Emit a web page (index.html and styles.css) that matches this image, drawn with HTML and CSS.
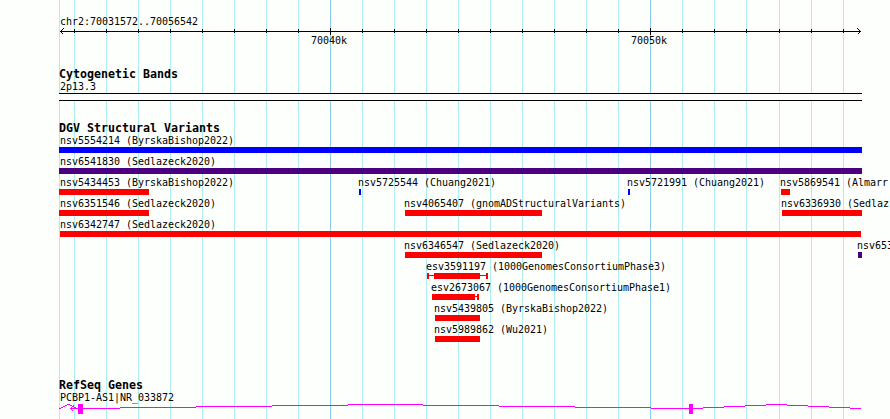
FILE: index.html
```
<!DOCTYPE html>
<html lang="en">
<head>
<meta charset="utf-8">
<title>Genome browser</title>
<link rel="stylesheet" href="styles.css">
</head>
<body>
<main class="browser">
  <svg class="grid" width="890" height="419" aria-hidden="true">
    <path class="minor" d="M59.5 0V419M74.5 0V419M106.5 0V419M138.5 0V419M170.5 0V419M202.5 0V419M234.5 0V419M266.5 0V419M298.5 0V419M362.5 0V419M394.5 0V419M426.5 0V419M458.5 0V419M490.5 0V419M522.5 0V419M554.5 0V419M586.5 0V419M618.5 0V419M682.5 0V419M714.5 0V419M746.5 0V419M779.5 0V419M811.5 0V419M843.5 0V419"/>
    <path class="major" d="M330.5 0V419M650.5 0V419"/>
  </svg>

  <svg class="ruler" width="890" height="66">
    <text x="60" y="25">chr2:70031572..70056542</text>
    <path class="ink" d="M60 31.5H861M74.5 29V33M106.5 29V33M138.5 29V33M170.5 29V33M202.5 29V33M234.5 29V33M266.5 29V33M298.5 29V33M330.5 28V35M362.5 29V33M394.5 29V33M426.5 29V33M458.5 29V33M490.5 29V33M522.5 29V33M554.5 29V33M586.5 29V33M618.5 29V33M650.5 28V35M682.5 29V33M714.5 29V33M746.5 29V33M779.5 29V33M811.5 29V33M843.5 29V33M63.5 28.5L60.5 31.5L63.5 34.5M857.5 28.5L860.5 31.5L857.5 34.5"/>
    <text x="311" y="44">70040k</text>
    <text x="631" y="44">70050k</text>
  </svg>

  <section class="track cyto">
    <h2>Cytogenetic Bands</h2>
    <svg width="890" height="21">
      <text x="60" y="10">2p13.3</text>
      <rect class="band" x="59" y="14" width="803" height="6"/>
      <path class="ink" d="M59 13.5H862M59 20.5H862"/>
    </svg>
  </section>

  <section class="track variants">
    <h2>DGV Structural Variants</h2>
    <svg width="890" height="21"><text x="60" y="10">nsv5554214 (ByrskaBishop2022)</text><rect class="blue" x="59" y="13" width="803" height="6"/></svg>
    <svg width="890" height="21"><text x="60" y="10">nsv6541830 (Sedlazeck2020)</text><rect class="purple" x="59" y="13" width="803" height="6"/></svg>
    <svg width="890" height="21">
      <text x="60" y="10">nsv5434453 (ByrskaBishop2022)</text><rect class="red" x="59" y="13" width="90" height="6"/>
      <text x="358" y="10">nsv5725544 (Chuang2021)</text><rect class="blue" x="359" y="13" width="2" height="6"/>
      <text x="627" y="10">nsv5721991 (Chuang2021)</text><rect class="blue" x="628" y="13" width="2" height="6"/>
      <text x="780" y="10">nsv5869541 (Almarr</text><rect class="red" x="781" y="13" width="9" height="6"/>
    </svg>
    <svg width="890" height="21">
      <text x="60" y="10">nsv6351546 (Sedlazeck2020)</text><rect class="red" x="59" y="13" width="90" height="6"/>
      <text x="404" y="10">nsv4065407 (gnomADStructuralVariants)</text><rect class="red" x="405" y="13" width="137" height="6"/>
      <text x="781" y="10">nsv6336930 (Sedlaz</text><rect class="red" x="782" y="13" width="80" height="6"/>
    </svg>
    <svg width="890" height="21"><text x="60" y="10">nsv6342747 (Sedlazeck2020)</text><rect class="red" x="60" y="13" width="801" height="6"/></svg>
    <svg width="890" height="21">
      <text x="404" y="10">nsv6346547 (Sedlazeck2020)</text><rect class="red" x="405" y="13" width="137" height="6"/>
      <text x="857" y="10">nsv653</text><rect class="purple" x="858" y="13" width="4" height="6"/>
    </svg>
    <svg width="890" height="21"><text x="426" y="10">esv3591197 (1000GenomesConsortiumPhase3)</text><path class="red" d="M427 13h2v2h5v-2h46v2h6v-2h2v6h-2v-3h-6v3h-46v-3h-5v3h-2z"/></svg>
    <svg width="890" height="21"><text x="431" y="10">esv2673067 (1000GenomesConsortiumPhase1)</text><path class="red" d="M432 13h43v2h2v-2h2v6h-2v-3h-2v3h-43z"/></svg>
    <svg width="890" height="21"><text x="434" y="10">nsv5439805 (ByrskaBishop2022)</text><rect class="red" x="435" y="13" width="45" height="6"/></svg>
    <svg width="890" height="21"><text x="434" y="10">nsv5989862 (Wu2021)</text><rect class="red" x="435" y="13" width="45" height="6"/></svg>
  </section>

  <section class="track genes">
    <h2>RefSeq Genes</h2>
    <svg width="890" height="28">
      <text x="60" y="10">PCBP1-AS1|NR_033872</text>
      <path class="intron" d="M59 17.5h2M61 16.5h2M63 15.5h2M65 14.5h2M67 13.5h3M70 14.5h2M72 15.5h2M74 16.5h2M70 17.5H120M120 16.5H196M196 15.5H272M272 14.5H348M348 13.5H423M423 14.5H499M499 15.5H575M575 16.5H651M651 17.5H703M703 16.5H724M724 15.5H745M745 14.5H766M766 13.5H787M787 14.5H808M808 15.5H829M829 16.5H850M850 17.5H861M73.5 14.5L70.5 17.5L73.5 20.5"/>
      <rect class="exon" x="78" y="13" width="5" height="10"/>
      <rect class="exon" x="689" y="13" width="4" height="10"/>
    </svg>
  </section>
</main>
</body>
</html>
```
FILE: styles.css
```
body {
  margin: 0;
  background: #fdfffc;
  color: #000;
  font: 10px/1 "DejaVu Sans Mono", monospace;
}

.browser {
  position: relative;
  width: 890px;
  height: 419px;
  overflow: hidden;
}

svg {
  display: block;
  position: relative;
  shape-rendering: crispEdges;
}

.grid {
  position: absolute;
  inset: 0;
}

text {
  font-size: 10px;
  letter-spacing: -0.02px;
  white-space: pre;
}

.track h2 {
  position: relative;
  margin: 0;
  padding-left: 59px;
  height: 14px;
  font-size: 11.63px;
  line-height: 16px;
  font-weight: bold;
}

.variants {
  padding-top: 19px;
}

.variants h2 {
  height: 14px;
}

.cyto {
  height: 35px;
}

.genes {
  padding-top: 33px;
}

.minor { stroke: #afeeee; }
.major { stroke: #87ceeb; }
.ink { stroke: #000; fill: none; }
.band { fill: #fff; }
.blue { fill: #00f; }
.purple { fill: #4b0082; }
.red { fill: #f00; }
.intron { stroke: #f0f; fill: none; }
.exon { fill: #f0f; }
```
